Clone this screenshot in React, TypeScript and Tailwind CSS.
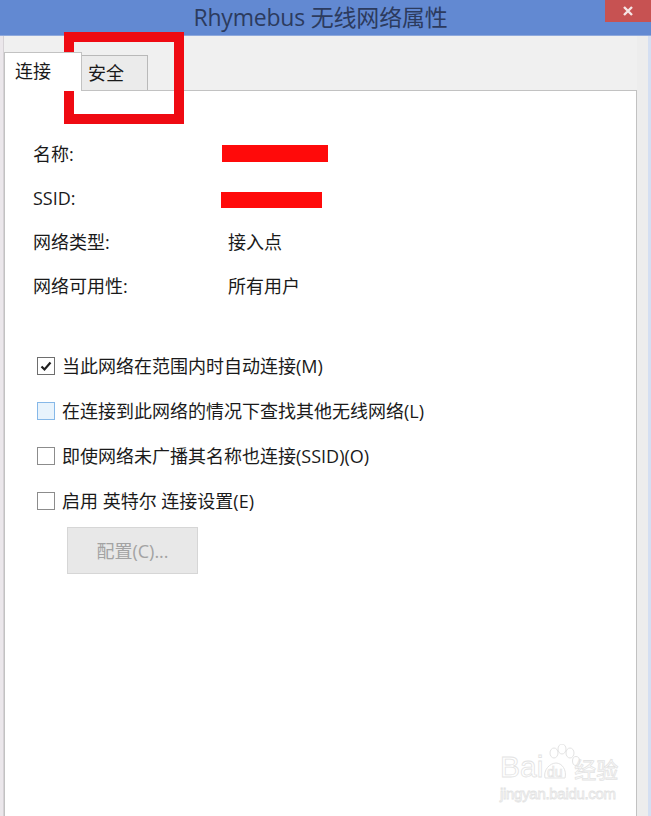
import React from "react";

const font = "font-['Open_Sans','Noto_Sans_CJK_SC',sans-serif]";

function Check({ state }: { state: "checked" | "hover" | "empty" }) {
  const cls =
    state === "checked"
      ? "border-[#6e6e6e] bg-white"
      : state === "hover"
      ? "border-[#86b8e8] bg-[#e8f3fc]"
      : "border-[#8c8c8c] bg-white";
  return (
    <div className={`w-[18px] h-[18px] border ${cls} flex items-center justify-center shrink-0`}>
      {state === "checked" && (
        <svg width="14" height="14" viewBox="0 0 14 14">
          <path d="M2.5 7.5 L5.5 10.5 L11.5 3.5" fill="none" stroke="#1e1e1e" strokeWidth="2.2" />
        </svg>
      )}
    </div>
  );
}

function InfoRow({ label, children }: { label: string; children?: React.ReactNode }) {
  return (
    <div className="flex items-center h-[44px]">
      <div className="w-[189px] shrink-0">{label}</div>
      <div className="flex-1 flex items-center">{children}</div>
    </div>
  );
}

function CheckRow({ state, text }: { state: "checked" | "hover" | "empty"; text: string }) {
  return (
    <div className="flex items-center h-[45px] gap-[7px]">
      <Check state={state} />
      <span className="whitespace-pre">{text}</span>
    </div>
  );
}

export default function App() {
  return (
    <div className={`w-[651px] h-[816px] bg-[#f0f0f0] relative overflow-hidden flex flex-col ${font} text-[#1a1a1a]`}>
      {/* title bar */}
      <div className="h-[36px] shrink-0 bg-[#6289d2] border-b border-[#8fa9dc] flex items-center justify-center pr-[10px] relative">
        <span className="text-[23px] leading-none text-[#2c3b5e] tracking-[-0.2px]">Rhymebus 无线网络属性</span>
        <div className="absolute right-0 top-0 w-[46px] h-[22px] bg-[#c75252] flex items-center justify-center">
          <svg width="12" height="12" viewBox="0 0 12 12">
            <path d="M2 2 L10 10 M10 2 L2 10" stroke="#f6e6e6" strokeWidth="2.4" />
          </svg>
        </div>
      </div>

      {/* body */}
      <div className="flex-1 flex">
        <div className="w-[4px] shrink-0 bg-[#ebe7eb] border-r border-[#d6d2d6]" />
        <div className="flex-1 flex flex-col pt-[16px]">
          {/* tabs */}
          <div className="flex items-end h-[38px] text-[18px]">
            <div className="w-[78px] h-[39px] bg-white border border-b-0 border-[#c2c2c2] relative z-10 -mb-px pl-[10px] pt-[5px] leading-[26px]">
              连接
            </div>
            <div className="w-[66px] h-[35px] bg-[#ebebeb] border border-l-0 border-b-0 border-[#b9b9b9] pl-[6px] pt-[4px] leading-[26px]">
              安全
            </div>
          </div>
          {/* panel */}
          <div className="flex-1 bg-white border border-b-0 border-[#c2c2c2] relative text-[18px] leading-[26px]">
            <div className="pl-[28px] pt-[41px]">
              <InfoRow label="名称:">
                <div className="w-[106px] h-[17px] bg-[#ff0a0a] -mt-[2px]" />
              </InfoRow>
              <InfoRow label="SSID:">
                <div className="w-[101px] h-[16px] bg-[#ff0a0a] mt-[4px] -ml-[1px]" />
              </InfoRow>
              <InfoRow label="网络类型:">
                <span className="pl-[6px]">接入点</span>
              </InfoRow>
              <InfoRow label="网络可用性:">
                <span className="pl-[6px]">所有用户</span>
              </InfoRow>
            </div>
            <div className="pl-[32px] mt-[35px]">
              <CheckRow state="checked" text="当此网络在范围内时自动连接(M)" />
              <CheckRow state="hover" text="在连接到此网络的情况下查找其他无线网络(L)" />
              <CheckRow state="empty" text="即使网络未广播其名称也连接(SSID)(O)" />
              <CheckRow state="empty" text="启用 英特尔 连接设置(E)" />
            </div>
            <div className="pl-[62px] mt-[4px]">
              <div className="w-[131px] h-[47px] bg-[#e8e8e8] border border-[#d6d6d6] flex items-center justify-center text-[#a3a3a3]">
                配置(C)...
              </div>
            </div>

            {/* watermark */}
            <div className="absolute left-[495px] top-[653px] flex flex-col items-start text-transparent [-webkit-text-stroke:0.8px_#e3e3e3] select-none">
              <div className="flex items-end h-[38px]">
                <span className="text-[30px] leading-[30px] font-['Liberation_Sans',sans-serif]">Bai</span>
                <svg width="40" height="38" viewBox="0 0 40 38" className="-ml-[1px]">
                  <ellipse cx="12" cy="9" rx="4" ry="5" fill="none" stroke="#e3e3e3" />
                  <ellipse cx="20" cy="5" rx="4" ry="5" fill="none" stroke="#e3e3e3" />
                  <ellipse cx="28" cy="9" rx="4" ry="5" fill="none" stroke="#e3e3e3" />
                  <ellipse cx="34" cy="17" rx="3.5" ry="4.5" fill="none" stroke="#e3e3e3" />
                  <path d="M3 34 C1 26 8 19 14 19 C20 19 25 26 23 34 Z" fill="none" stroke="#e3e3e3" />
                  <text x="5" y="33" fontSize="14" fill="none" stroke="#e3e3e3" strokeWidth="0.7" fontFamily="Liberation Sans">du</text>
                </svg>
                <span className="text-[22px] leading-[26px] -ml-[8px]">经验</span>
              </div>
              <span className="text-[15px] leading-[18px] mt-[3px] tracking-[-0.3px] font-['Liberation_Sans',sans-serif]">jingyan.baidu.com</span>
            </div>
          </div>
        </div>
        <div className="w-[14px] shrink-0 bg-[#ededed] flex justify-end">
          <div className="w-[3px] bg-[#d4dff2]" />
        </div>
      </div>

      {/* red annotation box */}
      <div className="absolute left-[64px] top-[32px] w-[120px] h-[92px] border-[10px] border-[#ef0a12]" />
    </div>
  );
}
